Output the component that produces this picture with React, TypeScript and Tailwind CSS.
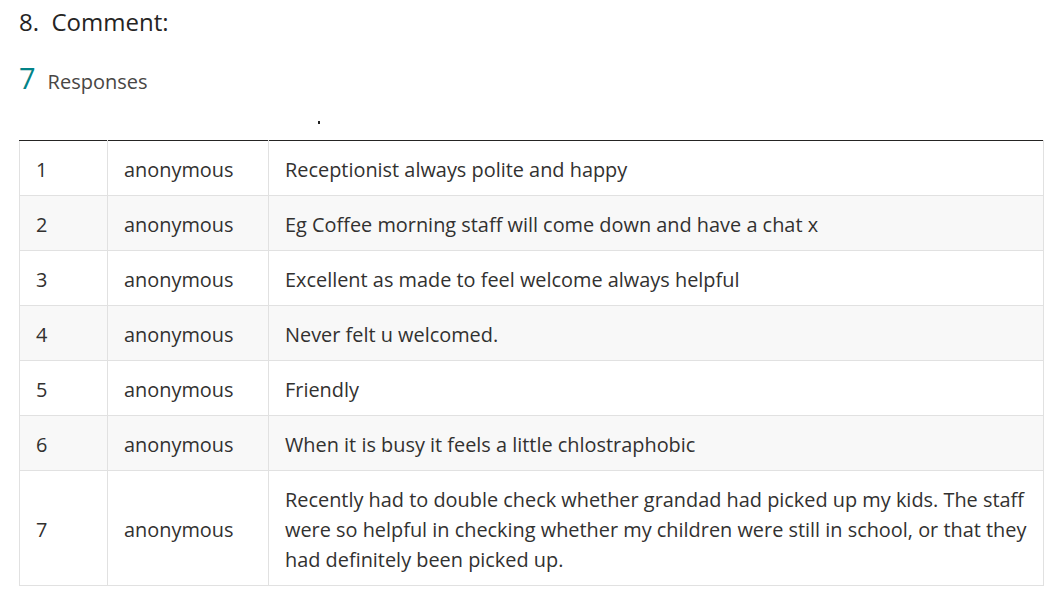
const rows: [number, string][] = [
  [1, "Receptionist always polite and happy"],
  [2, "Eg Coffee morning staff will come down and have a chat x"],
  [3, "Excellent as made to feel welcome always helpful"],
  [4, "Never felt u welcomed."],
  [5, "Friendly"],
  [6, "When it is busy it feels a little chlostraphobic"],
  [
    7,
    "Recently had to double check whether grandad had picked up my kids. The staff were so helpful in checking whether my children were still in school, or that they had definitely been picked up.",
  ],
];

export default function App() {
  return (
    <div className="min-h-[603px] bg-white pl-[19px] pr-[12px] font-['Open_Sans',sans-serif] text-[#333]">
      <h1 className="pt-[6px] text-[24px] leading-[32px] text-[#252423]">8.&nbsp; Comment:</h1>

      <div className="mt-[23px] flex items-baseline gap-[12px]">
        <span className="text-[29px] leading-[34px] text-[#038387]">7</span>
        <span className="text-[20px] text-[#484644]">Responses</span>
      </div>

      {/* header row is empty except for a stray dot */}
      <div className="mt-[20px] flex h-[23px] items-start pl-[299px]">
        <span className="mt-[4px] block h-[3px] w-[2px] bg-[#222]" />
      </div>

      <table className="w-[1025px] border-collapse text-[19.9px] text-[#323130]">
        <tbody>
          {rows.map(([n, text], i) => {
            const cell =
              "border border-[#e1e1e1] px-[16px] align-middle leading-[30px] " +
              (i === 0 ? "border-t-[#252423]" : "");
            return (
              <tr key={n} className={i % 2 === 1 ? "bg-[#f8f8f8]" : "bg-white"}>
                <td className={"h-[55px] w-[88px] pt-[4px] pb-0 " + cell}>{n}</td>
                <td className={"w-[161px] pt-[4px] pb-0 " + cell}>anonymous</td>
                <td className={"pt-[14px] pb-[10px] " + cell}>{text}</td>
              </tr>
            );
          })}
        </tbody>
      </table>
    </div>
  );
}
